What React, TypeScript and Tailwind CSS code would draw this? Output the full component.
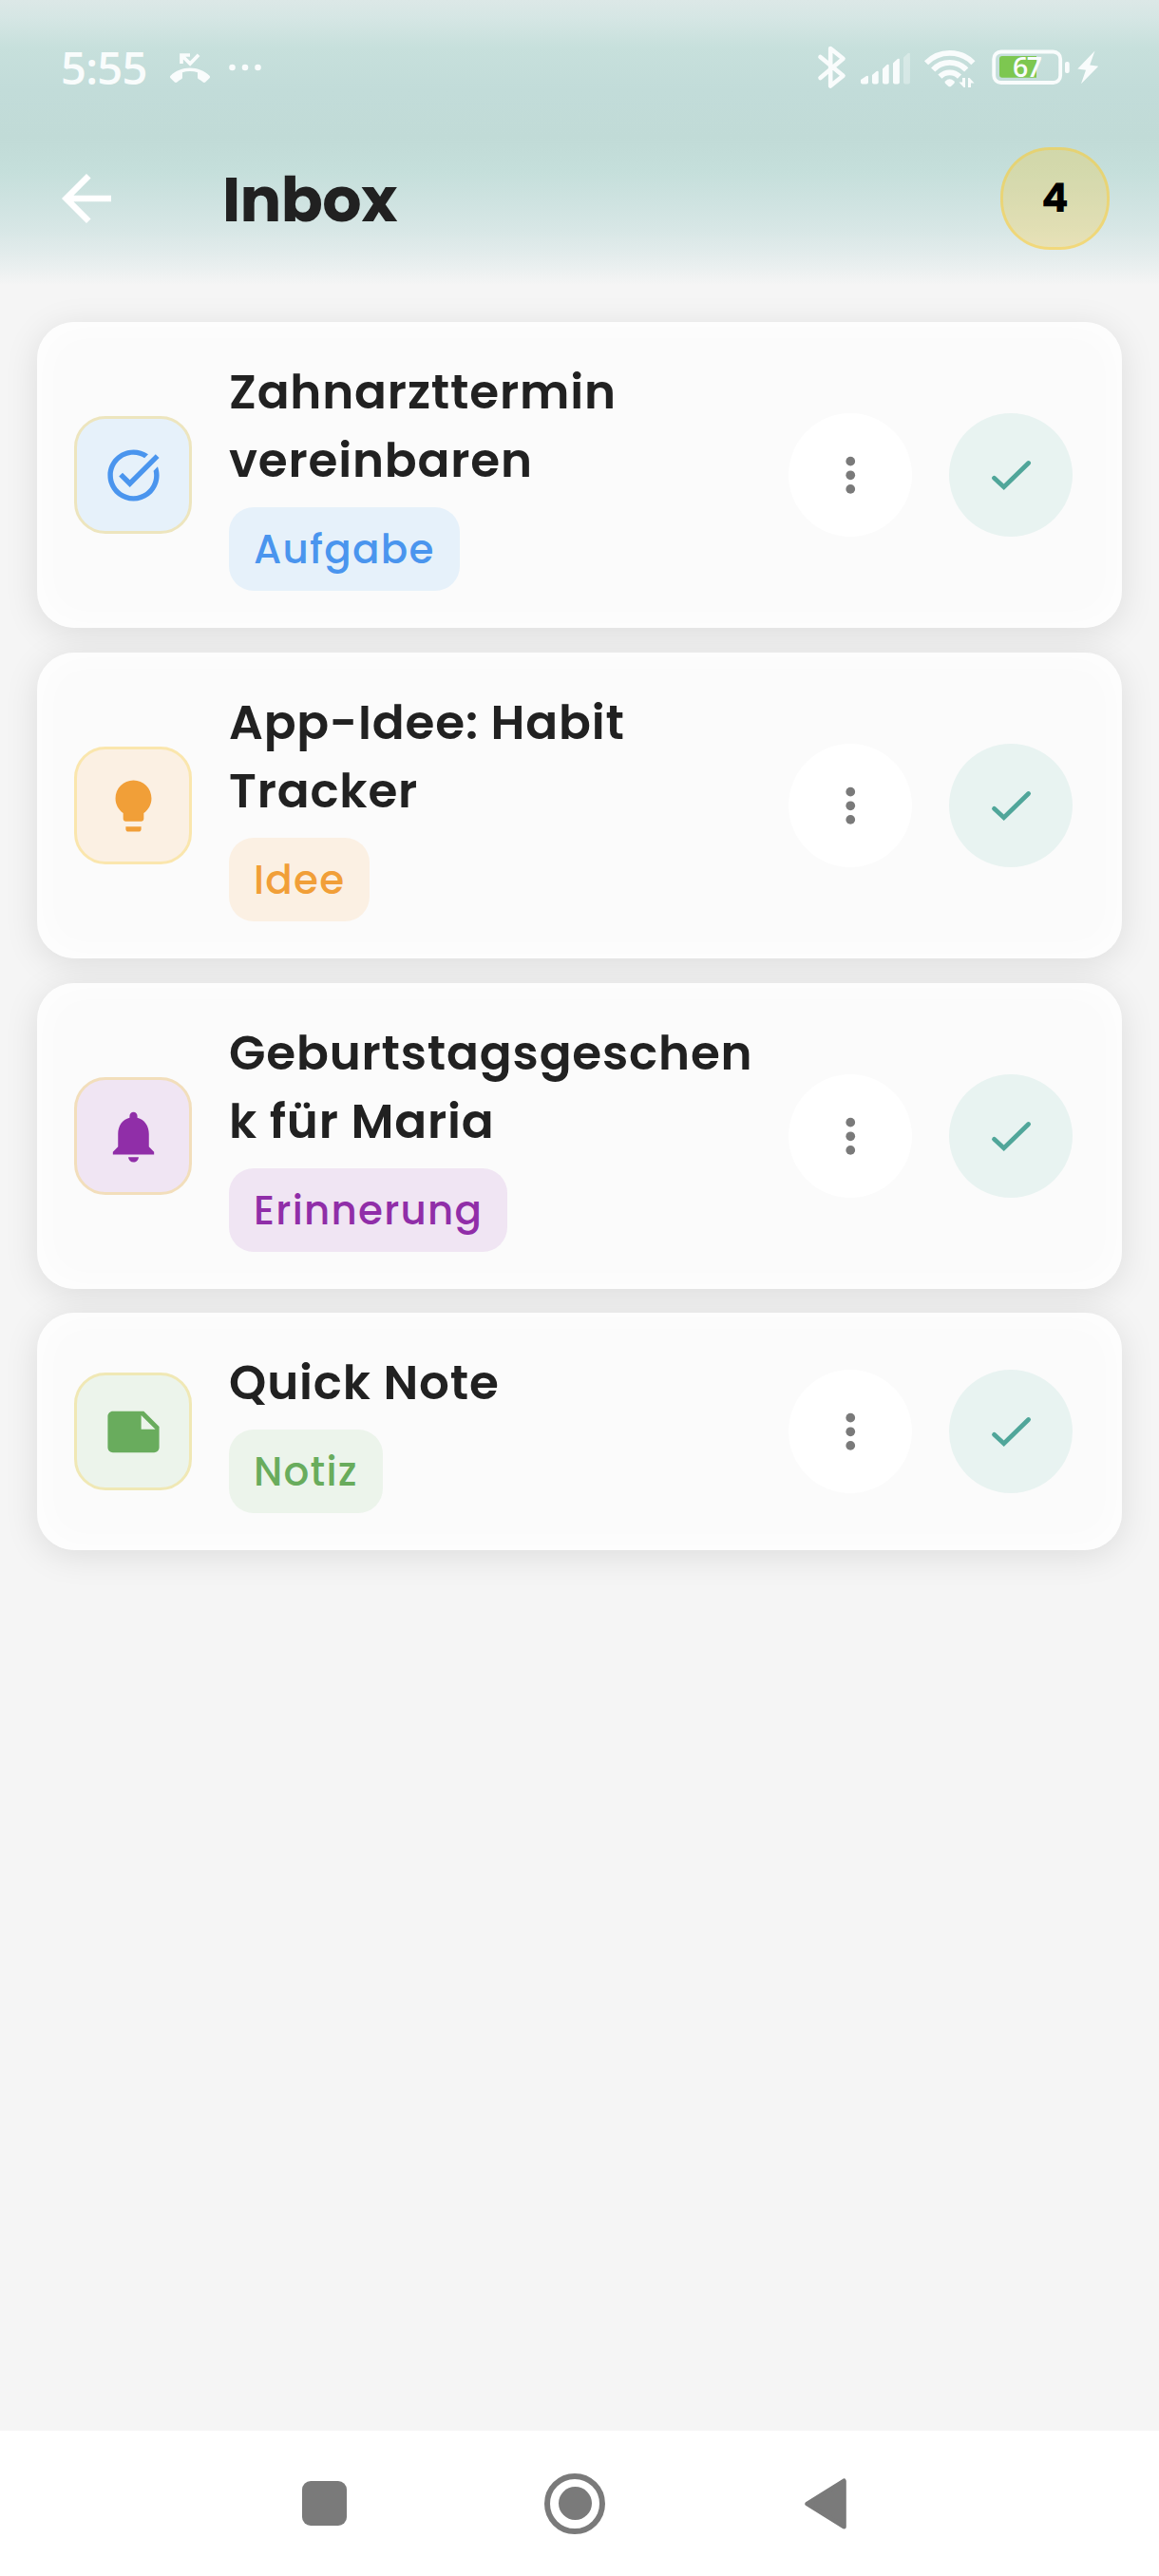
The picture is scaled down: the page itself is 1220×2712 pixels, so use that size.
import React from "react";
import { MdArrowBack, MdNote, MdNotifications, MdTaskAlt } from "react-icons/md";

type Item = {
  lines: string[];
  tag: string;
  icon: React.ReactNode;
  iconBox: string;
  chip: string;
};

function Lightbulb() {
  return (
    <svg viewBox="0 0 24 24" className="size-[65px]" fill="currentColor">
      <path d="M9 21c0 .55.45 1 1 1h4c.55 0 1-.45 1-1v-1H9v1zm3-19C8.14 2 5 5.14 5 9c0 2.38 1.19 4.47 3 5.74V17c0 .55.45 1 1 1h6c.55 0 1-.45 1-1v-2.26c1.81-1.27 3-3.36 3-5.74 0-3.86-3.14-7-7-7z" />
    </svg>
  );
}

const items: Item[] = [
  {
    lines: ["Zahnarzttermin", "vereinbaren"],
    tag: "Aufgabe",
    icon: <MdTaskAlt className="size-[65px]" />,
    iconBox: "bg-[#e6f1fa] border-[#ede5be] text-[#4a95ee]",
    chip: "bg-[#e6f1fa] text-[#4a95ee]",
  },
  {
    lines: ["App-Idee: Habit", "Tracker"],
    tag: "Idee",
    icon: <Lightbulb />,
    iconBox: "bg-[#fbf0e3] border-[#fae6ad] text-[#f19f38]",
    chip: "bg-[#fbf0e3] text-[#f19f38]",
  },
  {
    lines: ["Geburtstagsgeschen", "k für Maria"],
    tag: "Erinnerung",
    icon: <MdNotifications className="size-[65px]" />,
    iconBox: "bg-[#f0e5f3] border-[#f2debb] text-[#902ea8]",
    chip: "bg-[#f0e5f3] text-[#902ea8]",
  },
  {
    lines: ["Quick Note"],
    tag: "Notiz",
    icon: <MdNote className="size-[65px]" />,
    iconBox: "bg-[#ecf4eb] border-[#f0e8b5] text-[#69ac5d]",
    chip: "bg-[#ecf4eb] text-[#69ac5d]",
  },
];

function StatusBar() {
  return (
    <div className="flex h-[140px] items-start justify-between pl-16 pr-[56px] pt-[41px] text-[#f9fcfc]">
      <div className="flex h-[60px] items-center">
        <span className="w-[106px] font-['Open_Sans','Noto_Sans',sans-serif] text-[47px] font-semibold leading-[60px] tracking-[-0.7px]">5:55</span>
        <svg viewBox="170 41 120 60" className="h-[60px] w-[120px]" fill="currentColor">
          <path
            transform="translate(179 50.5) scale(1.75)"
            d="M23.71 16.67C20.66 13.78 16.54 12 12 12 7.46 12 3.34 13.78.29 16.67c-.18.18-.29.43-.29.71 0 .28.11.53.29.71l2.48 2.48c.18.18.43.29.71.29.27 0 .52-.11.7-.28.79-.74 1.69-1.36 2.66-1.85.33-.16.56-.5.56-.9v-3.1c1.45-.48 3-.73 4.6-.73s3.15.25 4.6.72v3.1c0 .39.23.74.56.9.98.49 1.87 1.12 2.67 1.85.18.18.43.28.7.28.28 0 .53-.11.71-.29l2.48-2.48c.18-.18.29-.43.29-.71 0-.28-.12-.53-.3-.71z"
          />
          <path d="M191 67V58h9M191.500 58.500l8.600 8.600 9-9.400" fill="none" stroke="currentColor" strokeWidth="3.700" />
          <circle cx="244.500" cy="71" r="3.300" />
          <circle cx="258" cy="71" r="3.300" />
          <circle cx="271.500" cy="71" r="3.300" />
        </svg>
      </div>
      <svg viewBox="856 41 308 60" className="h-[60px] w-[308px]" fill="currentColor">
        <path
          d="M863.5 60L887.500 79.800 874.200 90.500V51L887.500 61.800 863.500 82"
          fill="none"
          stroke="currentColor"
          strokeWidth="4.600"
          strokeLinecap="round"
          strokeLinejoin="round"
        />
        <path d="M906 86.500v-2.500l6-4q2-1 2 1v5.500q0 2-2 2h-4q-2 0-2-2z" />
        <path d="M918 86.500v-7.500l4.700-4q2-1 2 1v10.500q0 2-2 2H920q-2 0-2-2z" />
        <path d="M929 86.500v-14l4.700-4.500q2-1 2 1v17.500q0 2-2 2H931q-2 0-2-2z" />
        <path d="M940 86.500v-20l4.900-4.500q2-1 2 1v23.500q0 2-2 2H942q-2 0-2-2z" />
        <path d="M951 86.500v-26l4.900-4.500q2-1 2 1v29.500q0 2-2 2H953q-2 0-2-2z" opacity=".35" />
        <g fill="none" stroke="currentColor" strokeWidth="5.800">
          <path d="M975 66.200a34.500 34.500 0 0 1 49.400 0" />
          <path d="M982.200 73.400a24 24 0 0 1 35 0" />
          <path d="M989.400 80.600a14.500 14.500 0 0 1 20.600 0" />
        </g>
        <path d="M995 85.500q4.700-4.500 9.400 0 1 1.200 0 2.300l-3.200 3q-1.500 1-3 0l-3.200-3q-1-1.100 0-2.300z" />
        <path d="M1013 82h3v10h-1.500l-5-5.500h3.500zM1019 82h1.500l5 5.500H1022V92h-3z" />
        <rect x="1046.200" y="54.500" width="70" height="32.500" rx="7.500" fill="none" stroke="currentColor" strokeWidth="3.800" />
        <path d="M1055 59h36v22.700h-36q-3 0-3-3V62q0-3 3-3z" fill="#7dc750" />
        <rect x="1121" y="65" width="4.700" height="12" rx="2" />
        <path d="M1152.500 53.500L1134.300 72.500l8.700 1.200-5 14.600 18.200-18.600-9-1.200z" />
        <text x="1066" y="81.300" fontSize="28.500" textLength="31" className="font-['Open_Sans','Noto_Sans',sans-serif] font-semibold">
          67
        </text>
      </svg>
    </div>
  );
}

function Header() {
  return (
    <header className="h-[339px] bg-[linear-gradient(to_bottom,#dce8e7_0px,#d5e6e4_20px,#c7e0dc_50px,#c2dcd9_95px,#c1dbd7_145px,#c5dfdb_180px,#cfe3e1_215px,#d8e7e6_243px,#e5eded_272px,#f3f4f4_297px,#f5f5f5_300px)]">
      <StatusBar />
      <div className="flex h-[138px] items-center pl-[52px] pr-[52px]">
        <MdArrowBack className="size-[78px] text-white" />
        <h1 className="ml-[104px] mt-[2px] text-[65px] font-bold leading-none tracking-[-0.6px] text-[#212121]">Inbox</h1>
        <span className="ml-auto flex h-[108px] w-[115px] items-center justify-center rounded-[52px] border-[3px] border-[rgba(255,202,40,0.42)] bg-[rgba(255,202,40,0.26)] text-[42px] font-bold leading-none text-black">
          4
        </span>
      </div>
    </header>
  );
}

function Card({ item }: { item: Item }) {
  return (
    <li className="flex items-center rounded-[39px] bg-[#fbfbfb] py-[39px] pl-[39px] pr-[52px] shadow-[0_6px_36px_rgba(0,0,0,0.1),inset_0_0_40px_#ffffff] last:-mt-px">
      <div className={`flex size-[124px] items-center justify-center rounded-[33px] border-[3px] ${item.iconBox}`}>{item.icon}</div>
      <div className="ml-[39px] -mt-px flex w-[567px] flex-col items-start">
        {item.lines.map((line) => (
          <p key={line} className="whitespace-nowrap text-[50px] font-semibold leading-[72px] tracking-[0.83px] text-[#212121]">
            {line}
          </p>
        ))}
        <span className={`mt-[13px] rounded-[26px] px-[26px] pt-px text-[42px] font-medium leading-[87px] tracking-[1.25px] ${item.chip}`}>
          {item.tag}
        </span>
      </div>
      <button className="ml-auto flex size-[130px] items-center justify-center rounded-full bg-white" aria-label="Mehr">
        <svg viewBox="0 0 24 24" className="size-[58.5px]" fill="#7a7a7a">
          <circle cx="12" cy="6" r="2" />
          <circle cx="12" cy="12" r="2" />
          <circle cx="12" cy="18" r="2" />
        </svg>
      </button>
      <button className="ml-[39px] flex size-[130px] items-center justify-center rounded-full bg-[#e8f3f1]" aria-label="Erledigt">
        <svg viewBox="0 0 60 60" className="size-[60px]" fill="none" stroke="#50a69a" strokeWidth="4.800" strokeLinecap="round" strokeLinejoin="miter">
          <path d="M12.500 33.300L22.700 42.700 48.600 17.500" />
        </svg>
      </button>
    </li>
  );
}

export default function App() {
  return (
    <div className="flex h-[2712px] w-[1220px] flex-col overflow-hidden bg-[#f5f5f5] font-['Poppins','Inter',sans-serif]">
      <Header />
      <ul className="flex flex-col gap-[26px] px-[39px]">
        {items.map((item) => (
          <Card key={item.tag} item={item} />
        ))}
      </ul>
      <nav className="mt-auto flex h-[153px] items-center bg-white pl-[318px]">
        <span className="h-[47px] w-[47px] rounded-[9px] bg-[#7a7a7a]" />
        <span className="ml-[208px] flex size-[64px] items-center justify-center rounded-full border-[6px] border-[#7a7a7a]">
          <span className="size-[35px] rounded-full bg-[#7a7a7a]" />
        </span>
        <svg viewBox="0 0 44 54" className="ml-[210px] h-[54px] w-[44px]" fill="#7a7a7a" stroke="#7a7a7a" strokeWidth="5" strokeLinejoin="round">
          <path d="M2.800 27L41.300 3V51z" />
        </svg>
      </nav>
    </div>
  );
}
